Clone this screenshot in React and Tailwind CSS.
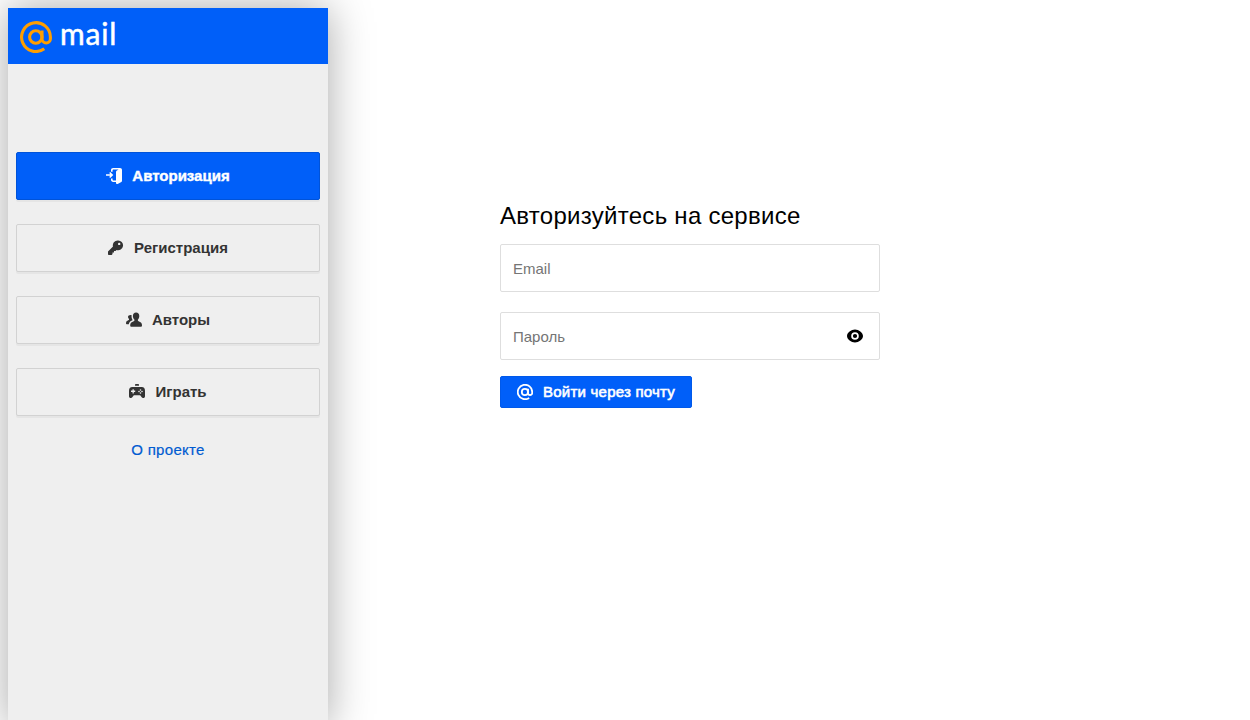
import React from "react";

const AtMark = ({ className, width = 3.1 }) => (
  <svg viewBox="0 0 32 32" className={className} fill="none" stroke="currentColor" strokeWidth={width} strokeLinecap="butt">
    <circle cx="15.800" cy="16" r="6.200" />
    <path d="M22 9.500v8.300a4.200 4.200 0 0 0 8.400 0V16A14.400 14.400 0 1 0 24.300 27.800" />
  </svg>
);

const DoorIcon = () => (
  <svg viewBox="0 0 16 16" className="size-4" fill="currentColor">
    <path d="M5 3.800V2.200C5 .9 5.900 0 7.200 0H14c1.200 0 2 .8 2 2v10.700c0 .8-.4 1.300-1.100 1.600l-3.300 1.600c-.8.400-1.600-.1-1.600-1V14H7.200C5.900 14 5 13.100 5 11.800V10.500h1.600v.9c0 .6.400 1 1 1H10V4.200c0-.8.300-1.300 1-1.600l1.600-1.000H7.600c-.6 0-1 .4-1 1v1.200z" />
    <path d="M0 6.200h4.300L3.200 5l1-1L7.300 7l-3.100 3-1-1 1.100-1.200H0z" />
  </svg>
);

const KeyIcon = () => (
  <svg viewBox="0 0 16 16" className="size-4" fill="currentColor">
    <path fillRule="evenodd" d="M9.800.4a4.900 4.900 0 1 1-1.300 9.500L7.600 11H6v1.600H4.500v1.500L3.700 15H1c-.6 0-1-.4-1-1v-2.400l5-5A4.900 4.900 0 0 1 9.800.4zm1.400 2.300a1.200 1.200 0 1 0 0 2.400 1.200 1.200 0 0 0 0-2.400z" />
  </svg>
);

const UsersIcon = () => (
  <svg viewBox="0 0 16 16" className="size-4" fill="currentColor">
    <path d="M10.100.5c2 0 3.200 1.300 3.200 3.400 0 1.500-.6 2.900-1.400 3.600v1.200c0 .5 2 .9 3 1.800.7.600 1.100 1.600 1.100 2.900 0 .9-.5 1.400-1.400 1.400H5.600c-.9 0-1.400-.5-1.400-1.400 0-1.300.4-2.300 1.100-2.900 1-.9 3.100-1.300 3.100-1.800V7.500C7.500 6.800 6.900 5.400 6.900 3.900c0-2.100 1.200-3.400 3.200-3.400z" />
    <path d="M4.600 2.900c.5 0 .8.100 1 .3-.2 1.900.1 3.500 1 4.700-.4.600-2 1-2.800 2-.6.700-.9 1.400-1 2.400H1.200c-.8 0-1.200-.4-1.200-1.100 0-1 .3-1.700.8-2.200.8-.6 2.200-.9 2.200-1.300v-.8C2.400 6.500 2 5.800 2 5c0-1.300 1-2.100 2.600-2.100z" />
  </svg>
);

const GameIcon = () => (
  <svg viewBox="0 0 16 16" className="size-4" fill="currentColor">
    <rect x="6" y="0" width="4" height="1.800" rx=".4" />
    <path fillRule="evenodd" d="M3.300 3h9.400C15 3 16 4.500 16 7v5.200c0 1.200-.8 1.800-1.700 1.800-.8 0-1.500-.4-2-1.200L11.200 11.300H4.800l-1.100 1.500c-.5.800-1.200 1.200-2 1.200C.8 14 0 13.400 0 12.200V7c0-2.500 1-4 3.300-4zM3.500 5.200v1.400H2V8h1.500v1.400h1.300V8h1.400V6.600H4.800V5.200zm8 0a.8.800 0 1 0 0 1.600.8.800 0 0 0 0-1.600zM10 6.700a.8.800 0 1 0 0 1.600.8.800 0 0 0 0-1.600zm3 0a.8.800 0 1 0 0 1.600.8.800 0 0 0 0-1.600zm-1.500 1.500a.8.800 0 1 0 0 1.600.8.800 0 0 0 0-1.600z" />
  </svg>
);

const EyeIcon = () => (
  <svg viewBox="0 0 16 16" className="size-4" fill="currentColor">
    <path fillRule="evenodd" d="M8 1.500c3.700 0 8 3 8 6.500s-4.300 6.500-8 6.500S0 11.500 0 8s4.300-6.500 8-6.500zm0 2.700a3.800 3.800 0 1 0 0 7.600 3.800 3.800 0 0 0 0-7.600zm0 1.700a2.100 2.100 0 1 1 0 4.200 2.100 2.100 0 0 1 0-4.200z" />
  </svg>
);

const navItems = [
  { label: "Авторизация", Icon: DoorIcon, active: true },
  { label: "Регистрация", Icon: KeyIcon },
  { label: "Авторы", Icon: UsersIcon },
  { label: "Играть", Icon: GameIcon },
];

function NavButton({ label, Icon, active }) {
  const tone = active
    ? "bg-[#005ff9] border-[#0053d9] text-white [-webkit-text-stroke:0.4px]"
    : "bg-[#efefef] border-[#d2d2d2] text-[#333333]";
  return (
    <button className={`flex h-12 w-full items-center justify-center gap-[10px] rounded-[2px] border text-[15px] font-bold shadow-[0_2px_0_rgba(0,0,0,0.04)] ${tone}`}>
      <Icon />
      <span>{label}</span>
    </button>
  );
}

export default function App() {
  return (
    <div className="flex h-screen overflow-hidden bg-white pt-2 pl-2 font-['Liberation_Sans',Arial,sans-serif]">
      <aside className="h-[720px] w-80 shrink-0 bg-[#efefef] shadow-[0_0_40px_rgba(0,0,0,0.34)]">
        <header className="flex h-14 items-center bg-[#005ff9] pt-0.5 pl-3">
          <AtMark className="size-8 text-[#ff9e00]" />
          <span className="ml-2 pb-2 font-[Lato,sans-serif] text-[30px] leading-8 tracking-[0.8px] text-white [-webkit-text-stroke:0.5px]">mail</span>
        </header>
        <nav className="mt-[88px] flex flex-col items-center gap-6 px-2">
          {navItems.map((item) => (
            <NavButton key={item.label} {...item} />
          ))}
          <a className="text-[15px] leading-5 tracking-[0.3px] text-[#005bd1] [-webkit-text-stroke:0.2px]">О проекте</a>
        </nav>
      </aside>
      <main className="ml-[172px] w-[380px] pt-[192px]">
        <h1 className="text-2xl leading-8 tracking-[0.28px] whitespace-nowrap text-black">Авторизуйтесь на сервисе</h1>
        <form className="mt-3">
          <input placeholder="Email" className="block h-12 w-full rounded-[2px] border border-[#dedede] px-3 text-[15px] placeholder:text-[#757575]" />
          <div className="mt-5 flex h-12 items-center rounded-[2px] border border-[#dedede] pr-4 pl-3">
            <input type="password" placeholder="Пароль" className="min-w-0 flex-1 pt-0.5 text-[15px] placeholder:text-[#757575]" />
            <EyeIcon />
          </div>
          <button type="button" className="mt-4 flex h-8 w-48 items-center gap-[10px] rounded-[2px] border border-[#0059ea] bg-[#005ff9] pl-4 text-[15px] text-white">
            <AtMark className="size-4" width={3.6} />
            <span className="tracking-[0.23px] whitespace-nowrap [-webkit-text-stroke:0.6px]">Войти через почту</span>
          </button>
        </form>
      </main>
    </div>
  );
}
